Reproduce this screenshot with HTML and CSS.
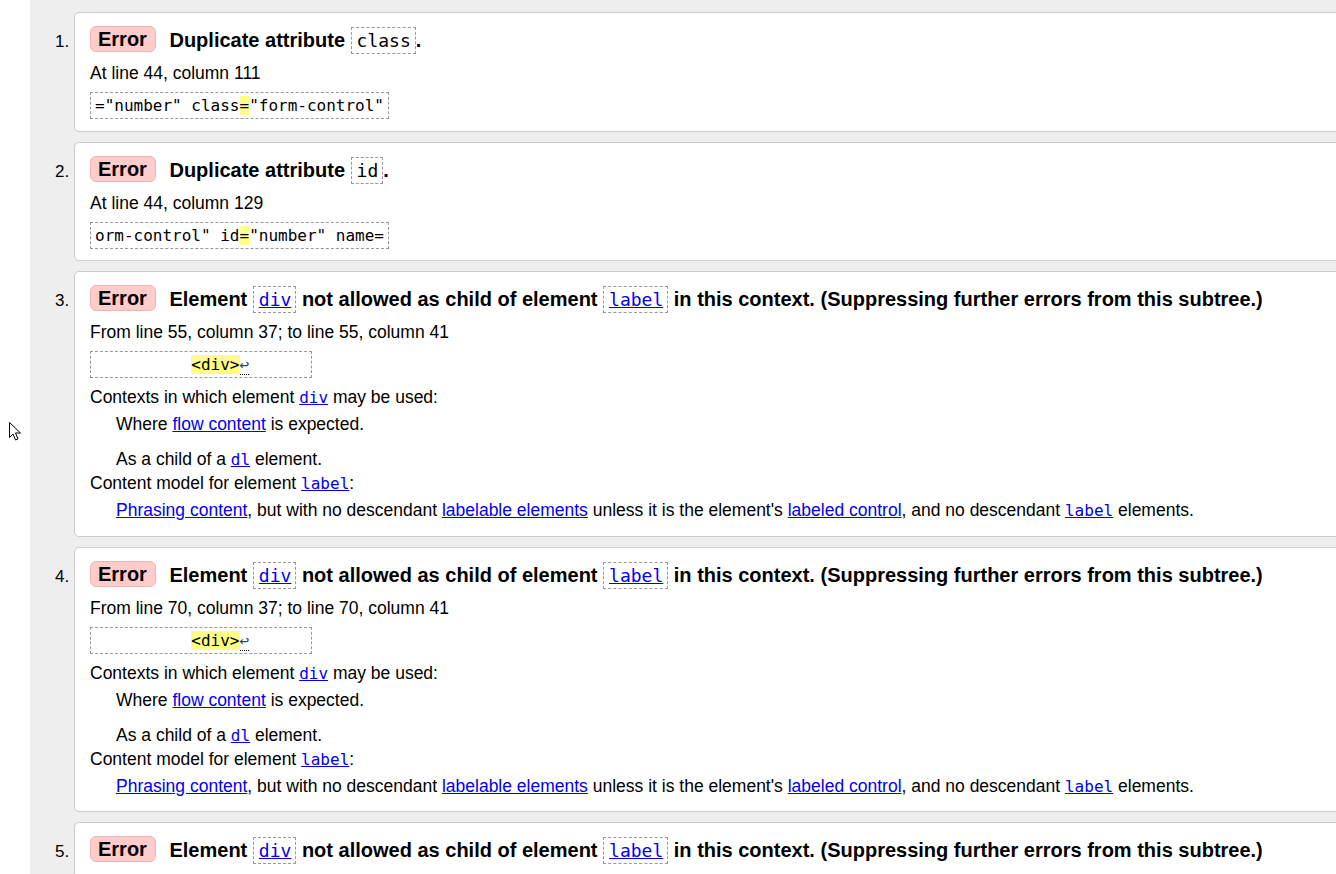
FILE: index.html
```html
<!DOCTYPE html>
<html>
<head>
<meta charset="utf-8">
<title>Validator messages</title>
<link rel="stylesheet" href="styles.css">
</head>
<body>
<div class="main">
  <ol class="messages">
    <li class="msg">
      <p class="title"><span class="badge">Error</span> Duplicate attribute <code class="tcode">class</code>.</p>
      <p class="loc">At line 44, column 111</p>
      <p class="extract"><code class="ext">="number" class<b class="hl">=</b>"form-control"</code></p>
    </li>
    <li class="msg">
      <p class="title"><span class="badge">Error</span> Duplicate attribute <code class="tcode">id</code>.</p>
      <p class="loc">At line 44, column 129</p>
      <p class="extract"><code class="ext">orm-control" id<b class="hl">=</b>"number" name=</code></p>
    </li>
    <li class="msg">
      <p class="title"><span class="badge">Error</span> Element <code class="tcode"><a href="#">div</a></code> not allowed as child of element <code class="tcode"><a href="#">label</a></code> in this context. (Suppressing further errors from this subtree.)</p>
      <p class="loc">From line 55, column 37; to line 55, column 41</p>
      <p class="extract"><code class="ext">          <b class="hl">&lt;div&gt;</b><span class="lf">↩</span>      </code></p>
      <dl class="elab">
        <dt>Contexts in which element <a href="#"><code>div</code></a> may be used:</dt>
        <dd class="first">Where <a href="#">flow content</a> is expected.</dd>
        <dd class="next">As a child of a <a href="#"><code>dl</code></a> element.</dd>
        <dt>Content model for element <a href="#"><code>label</code></a>:</dt>
        <dd class="first"><a href="#">Phrasing content</a>, but with no descendant <a href="#">labelable elements</a> unless it is the element's <a href="#">labeled control</a>, and no descendant <a href="#"><code>label</code></a> elements.</dd>
      </dl>
    </li>
    <li class="msg">
      <p class="title"><span class="badge">Error</span> Element <code class="tcode"><a href="#">div</a></code> not allowed as child of element <code class="tcode"><a href="#">label</a></code> in this context. (Suppressing further errors from this subtree.)</p>
      <p class="loc">From line 70, column 37; to line 70, column 41</p>
      <p class="extract"><code class="ext">          <b class="hl">&lt;div&gt;</b><span class="lf">↩</span>      </code></p>
      <dl class="elab">
        <dt>Contexts in which element <a href="#"><code>div</code></a> may be used:</dt>
        <dd class="first">Where <a href="#">flow content</a> is expected.</dd>
        <dd class="next">As a child of a <a href="#"><code>dl</code></a> element.</dd>
        <dt>Content model for element <a href="#"><code>label</code></a>:</dt>
        <dd class="first"><a href="#">Phrasing content</a>, but with no descendant <a href="#">labelable elements</a> unless it is the element's <a href="#">labeled control</a>, and no descendant <a href="#"><code>label</code></a> elements.</dd>
      </dl>
    </li>
    <li class="msg">
      <p class="title"><span class="badge">Error</span> Element <code class="tcode"><a href="#">div</a></code> not allowed as child of element <code class="tcode"><a href="#">label</a></code> in this context. (Suppressing further errors from this subtree.)</p>
    </li>
  </ol>
</div>
<svg class="cursor" width="14" height="22" viewBox="0 0 14 22" aria-hidden="true">
  <path d="M1.5 1.5 L1.5 16.5 L5 13 L7.5 19 L10 18 L7.5 12 L12.5 12 Z" fill="#fff" stroke="#000" stroke-width="1" stroke-linejoin="miter"/>
</svg>
</body>
</html>
```
FILE: styles.css
```css
html, body {
  margin: 0;
  padding: 0;
  background: #fff;
  height: 100%;
  overflow: hidden;
}
body {
  font-family: "Liberation Sans", Arial, sans-serif;
  font-size: 17.5px;
  color: #000;
}
.main {
  margin-left: 30px;
  background: #eee;
  min-height: 874px;
  overflow: hidden;
}
.messages {
  margin: 12px -30px 0 0;
  padding: 0 0 0 44px;
  font-size: 17.5px;
  line-height: 24px;
}
.msg {
  background: #fff;
  border: 1px solid #ccc;
  border-radius: 5px;
  padding: 13px 16px 11.5px 15px;
  margin-bottom: 10px;
}
.msg::marker {
  font-size: 17px;
}
.msg p {
  margin: 0;
}
.title {
  font-size: 20px;
  font-weight: bold;
  line-height: 29px;
}
.badge {
  display: inline-block;
  background: #fcc;
  border: 1px solid #f0b4b4;
  border-radius: 6px;
  padding: 0 8px 0 7px;
  line-height: 24px;
  margin-right: 8px;
  vertical-align: 1px;
}
.tcode {
  font-family: "DejaVu Sans Mono", "Liberation Mono", monospace;
  font-weight: normal;
  font-size: 18px;
  border: 1px dashed #999;
  padding: 2px 4px 2px 5px;
  line-height: 20px;
}
.loc {
  margin-top: 7px !important;
  line-height: 23px;
}
.extract {
  margin-top: 7px !important;
  line-height: 27px;
}
.ext {
  display: inline-block;
  font-family: "DejaVu Sans Mono", "Liberation Mono", monospace;
  font-size: 16px;
  line-height: 25px;
  border: 1px dashed #999;
  padding: 0 4px;
  white-space: pre;
  vertical-align: top;
}
.hl {
  font-weight: normal;
  background: #ff8;
}
.lf {
  color: #345;
  border-bottom: 1px dotted #000;
}
a {
  color: #00e;
  text-decoration: underline;
}
code {
  font-family: "DejaVu Sans Mono", "Liberation Mono", monospace;
  font-size: 16px;
}
.tcode a {
  font-size: 18px;
}
.elab {
  margin: 7px 0 2px 0;
  line-height: 24px;
}
.elab code {
  line-height: 16px;
}
.elab dt {
  margin: 0;
}
.elab dd {
  margin: 0 0 0 26px;
}
.elab dd.first {
  margin-top: 3px;
}
.elab dd.next {
  margin-top: 11px;
}
.cursor {
  position: absolute;
  left: 8px;
  top: 421px;
}
```
